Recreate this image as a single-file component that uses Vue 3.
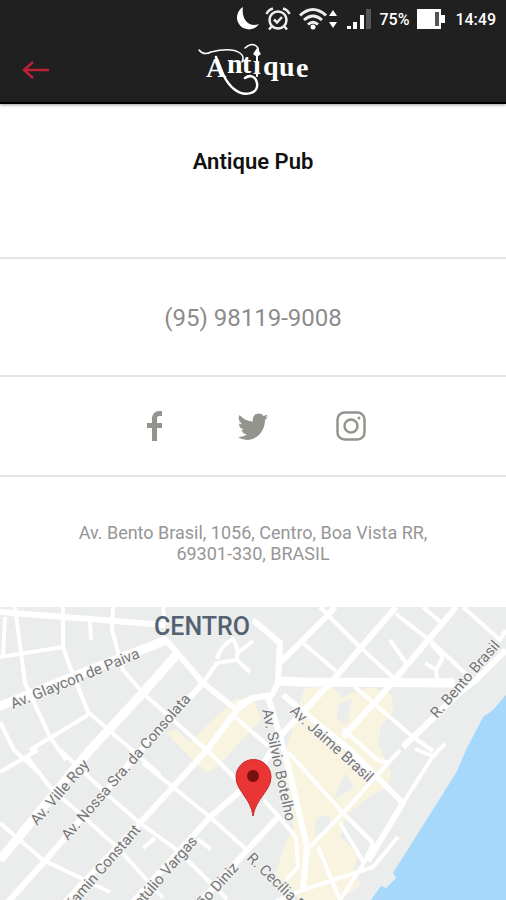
<template>
  <div class="page">
    <header class="header">
      <div class="status">
        <svg class="moon" viewBox="0 0 24 24" width="24" height="24">
          <path d="M8 0 A12 12 0 1 0 24 17 C14 21 6 12 8 0Z" fill="#fff" />
        </svg>
        <svg viewBox="0 0 26 24" width="26" height="24" fill="none" stroke="#eee" stroke-width="2.500">
          <circle cx="13" cy="13" r="8.5" />
          <path d="M1.5 7Q3 3 8 1.5M24.500 7Q23 3 18 1.500M7 19L4 22.500M19 19L22 22.500M9 12.500L12 15.500L17 10" />
        </svg>
        <svg viewBox="0 0 38 24" width="38" height="24" fill="none" stroke="#eee" stroke-width="3">
          <path d="M1 8.500Q14 -3.500 27 8.500M5 13Q14 5 23 13M9 17.500Q14 13 19 17.500" />
          <circle cx="14" cy="20" r="2.500" fill="#fff" stroke="none" />
          <path d="M30 9L34 3L38 9ZM30 15L34 21L38 15Z" fill="#fff" stroke="none" />
        </svg>
        <svg viewBox="0 0 26 24" width="26" height="24" fill="#fff">
          <path d="M2 19h4v3H2zM8 15h4v7H8zM15 8h4v14h-4z" />
          <path d="M21 2h5v20h-5z" fill="#555" />
        </svg>
        <span class="battery-text">75%</span>
        <svg viewBox="0 0 28 22" width="28" height="22">
          <path d="M0 1h24v6h4v8h-4v6H0z" fill="#fff" />
          <path d="M18 4h4v14h-4z" fill="#555" />
        </svg>
        <time class="clock">14:49</time>
      </div>
      <div class="toolbar">
        <button class="back" type="button" aria-label="Voltar">
          <svg viewBox="0 0 28 20" width="28" height="20" fill="none" stroke="#bd2034" stroke-width="2.500">
            <path d="M27 10H2M11 2L2 10L11 18" />
          </svg>
        </button>
        <svg class="logo" viewBox="0 0 112 56" width="112" height="56" role="img" aria-label="Antique">
          <g fill="#fff" class="logo-text">
            <text x="9 30 45 56 66 82 99" y="35 31 31 32 33 34 35">Antıque</text>
          </g>
          <g fill="none" stroke="#fff" stroke-linecap="round">
            <path d="M2 8Q7 14 14 10Q34 5 43 11Q48 15 45 20" stroke-width="1.500" />
            <path d="M19 15C23 26 28 40 37 47C48 56 62 51 60 41C58 33 52 33 48 36" stroke-width="2.500" />
            <path d="M48 6Q56 -1 61 6Q62 10 60 14" stroke-width="1.500" />
            <path d="M60 12V34" stroke-width="2" />
          </g>
          <path d="M60 6L64 12L60 15L56 12Z" fill="#fff" />
        </svg>
      </div>
    </header>

    <main>
      <section class="row name">
        <h1>Antique Pub</h1>
      </section>
      <section class="row phone">
        <a href="tel:95981199008">(95) 98119-9008</a>
      </section>
      <nav class="row social">
        <a href="#" aria-label="Facebook">
          <svg viewBox="0 0 30 30" width="30" height="30">
            <path d="M12 30V17H7V12H12V8C12 3 15 0 19 0H22V5H19Q17 5 17 8V12H22V17H17V30Z" fill="#94948e" />
          </svg>
        </a>
        <a href="#" aria-label="Twitter">
          <svg viewBox="0 0 30 30" width="30" height="30">
            <path d="M30 5.500Q28.500 7.500 27 9C27 20 19 29 9 29Q4 29 0 26Q5 26 9 23.500Q5 23 3.500 19H6Q1 17 1 12.500L4 13.500Q-1 9 1.500 4Q7 10 15 10.500C13 3 22 0 25.500 5L29.500 3.500Q29 5 27 6.500Z" fill="#94948e" />
          </svg>
        </a>
        <a href="#" aria-label="Instagram">
          <svg viewBox="0 0 30 30" width="30" height="30" fill="none" stroke="#94948e" stroke-width="2.500">
            <rect x="1.500" y="1.500" width="27" height="27" rx="7" />
            <circle cx="15" cy="15" r="6.500" />
            <circle cx="23" cy="7" r="1.500" fill="#94948e" stroke="none" />
          </svg>
        </a>
      </nav>
      <address class="address">
        Av. Bento Brasil, 1056, Centro, Boa Vista RR,<br />
        69301-330, BRASIL
      </address>

      <svg class="map" viewBox="0 0 506 293" role="img" aria-label="Mapa">
        <rect width="506" height="293" fill="#ebeded" />
        <path d="M166 126L176 122L190 135L235 92L253 90L261 112L218 159L207 166L198 158L182 142Z" fill="#f8f4df" />
        <path d="M304 82L330 78L342 90L370 80L391 87L393 105L381 118L378 137L391 166L388 180L372 188L346 208L340 230L360 247L353 262L361 278L340 293H300L275 267L286 235L294 222L282 152L290 130Z" fill="#f8f4df" />
        <path d="M338 98L352 91L347 117L337 112ZM316 212L329 207L331 222L315 229ZM345 166L354 180L333 194Z" fill="#ebeded" />
        <path d="M506 88L493 103L483 110L466 143L456 166L393 266L396 271L386 281L381 279L371 293H506Z" fill="#a5d8fb" />
        <g fill="none" stroke="#fff" stroke-linejoin="round">
          <path v-for="(d, i) in calles" :key="i" :d="d" stroke-width="4" />
          <path v-for="(d, i) in avenidas" :key="i" :d="d" stroke-width="6" />
          <path v-for="(d, i) in principales" :key="i" :d="d" stroke-width="9" />
        </g>
        <g class="street">
          <text
            v-for="r in rotulos"
            :key="r.texto"
            :transform="`translate(${r.x} ${r.y}) rotate(${r.giro})`"
          >{{ r.texto }}</text>
        </g>
        <text x="154" y="28" class="district">CENTRO</text>
        <path d="M253 209C251 191 236 184 236 170A17.500 17.500 0 0 1 271 170C271 184 256 191 253 209Z" fill="#ea3535" stroke="#c9292c" />
        <circle cx="253" cy="169" r="6" fill="#7b0f12" />
      </svg>
    </main>
  </div>
</template>

<script setup>
const principales = [
  'M-5 101L40 83L110 55L167 33',
  'M179 45L140 89L90 143L0 253',
  'M277 74L300 75L455 76'
]

const avenidas = [
  'M0 5L90 12L165 18',
  'M165 32L203 76L237 103',
  'M203 76L135 150L44 255L8 295',
  'M253 90L237 103L207 143L140 216L65 295',
  'M396 0L333 73L283 126L253 173L210 210L133 295',
  'M456 0L386 83L343 130',
  'M278 210L253 237L200 295',
  'M335 0L326 10L280 56',
  'M506 43L476 73L458 87L403 140',
  'M283 88L350 143L378 171L403 196L368 254',
  'M253 13L280 36L278 76L272 88L253 91L237 98',
  'M268 90L274 109L288 158L307 240L303 281'
]

const calles = [
  'M15 0L25 76L50 130L66 153',
  'M63 0L63 40L70 60L88 105L132 143L160 168',
  'M113 0L112 23L123 63L143 86L203 140L218 154',
  'M165 18L163 0M5 10L3 50M0 50L63 40M90 15L91 33',
  'M0 115L14 143L37 164M30 143L88 108M0 165L38 143',
  'M27 150L50 180L117 240L163 291',
  'M60 143L110 190L140 216L177 243L227 292',
  'M143 156L173 180L210 210L247 243',
  'M0 216L43 253L110 285M207 143L236 172',
  'M203 76L217 56L237 53L250 65M217 52Q220 39 233 32Q240 43 236 54',
  'M253 34L237 46M233 108L268 139M143 241L155 231M197 232L211 242',
  'M320 0L360 40L397 74M303 36L336 64',
  'M396 7L433 36L466 67M423 0L443 17M463 0L500 33L506 23',
  'M390 33L406 56M425 56L436 63L443 50M436 63L437 73M443 50L431 37',
  'M355 80L413 130L433 144M343 122L379 154L388 155',
  'M436 147L433 149L403 196M400 143L343 206L310 240',
  'M288 145L343 206L373 236M340 216L364 256L340 293L318 240',
  'M398 230L373 260L303 283L276 294M373 236L364 256',
  'M279 210L296 230L298 260L286 273M264 193L279 210',
  'M415 142L433 149L445 137'
]

const rotulos = [
  { texto: 'Av. Glaycon de Paiva', x: 13, y: 102, giro: -22 },
  { texto: 'Av. Ville Roy', x: 37, y: 219, giro: -49 },
  { texto: 'Av. Nossa Sra. da Consolata', x: 68, y: 234, giro: -49 },
  { texto: 'Benjamin Constant', x: 58, y: 319, giro: -49 },
  { texto: 'R. Getúlio Vargas', x: 123, y: 321, giro: -49 },
  { texto: 'R. João Diniz', x: 181, y: 326, giro: -48 },
  { texto: 'Av. Silvio Botelho', x: 262, y: 103, giro: 78 },
  { texto: 'Av. Jaime Brasil', x: 289, y: 105, giro: 42 },
  { texto: 'R. Bento Brasil', x: 437, y: 112, giro: -49 },
  { texto: 'R. Cecília Brasil', x: 246, y: 252, giro: 44 }
]
</script>

<style>
body {
  margin: 0;
  background: #fff;
}
</style>

<style scoped>
.page {
  width: 100%;
  font-family: Roboto, sans-serif;
  overflow: hidden;
}

.header {
  background: #202020;
  border-bottom: 2px solid #000;
  box-shadow: 0 1px 3px rgba(0, 0, 0, 0.4);
  color: #fff;
}

.status {
  display: flex;
  justify-content: flex-end;
  align-items: center;
  gap: 8px;
  height: 38px;
  padding-right: 10px;
}

.status svg {
  flex: none;
}

.moon {
  margin-right: -2px;
}

.battery-text,
.clock {
  font-size: 16px;
  font-weight: 500;
}

.clock {
  margin-left: 2px;
}

.toolbar {
  display: grid;
  grid-template-columns: 1fr auto 1fr;
  align-items: center;
  height: 64px;
  padding: 0 16px;
}

.back {
  justify-self: start;
  display: flex;
  padding: 6px;
  border: none;
  background: none;
  cursor: pointer;
}

.logo-text {
  font-family: "Liberation Serif", serif;
  font-size: 28px;
  font-weight: bold;
}

.row {
  display: flex;
  align-items: center;
  justify-content: center;
  border-bottom: 2px solid #e5e5e5;
}

.name {
  padding: 44px 16px 81px;
}

.name h1 {
  margin: 0;
  font-size: 22px;
  line-height: 28px;
  font-weight: 600;
  color: #111;
}

.phone {
  padding: 45px 16px 43px;
}

.phone a {
  color: #8c8c8c;
  font-size: 24px;
  line-height: 28px;
  text-decoration: none;
}

.social {
  gap: 68px;
  padding: 34px 16px;
}

.social a {
  display: flex;
}

.address {
  padding: 45px 16px 43px;
  text-align: center;
  font-style: normal;
  font-size: 18px;
  line-height: 21px;
  color: #969696;
}

.map {
  display: block;
  width: 100%;
}

.street {
  font-size: 15px;
  fill: #757575;
  stroke: #f5f5f5;
  stroke-width: 2px;
  paint-order: stroke;
}

.district {
  font-size: 25px;
  font-weight: 500;
  fill: #536171;
}
</style>
